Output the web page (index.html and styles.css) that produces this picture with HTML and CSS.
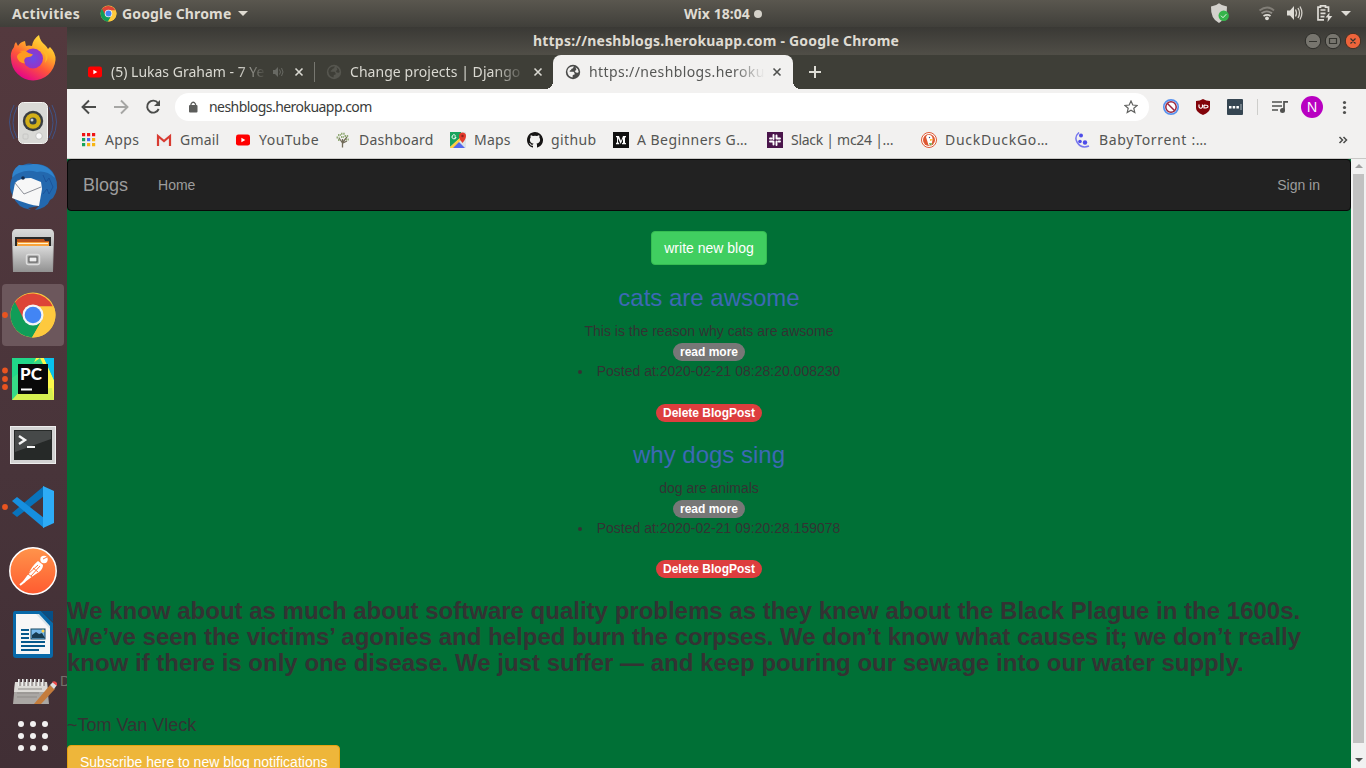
FILE: index.html
```html
<!DOCTYPE html>
<html lang="en">
<head>
<meta charset="utf-8">
<title>Blogs</title>
<link rel="stylesheet" href="styles.css">
</head>
<body>
<svg width="0" height="0" class="defs">
  <defs>
    <symbol id="chrome" viewBox="0 0 48 48">
      <circle cx="24" cy="24" r="22.5" fill="#fdc93e"/>
      <path d="M4.5 12.8A22.5 22.5 0 0 1 43.8 15.5H24L14 29z" fill="#dd4437"/>
      <path d="M5.8 10.800A22.500 22.500 0 0 0 23 46.500L33 29 15 29z" fill="#109d58"/>
      <path d="M33.500 28.500L23 46.500A22.500 22.500 0 0 0 44.800 15.500H24z" fill="#fdc93e"/>
      <circle cx="24" cy="24" r="10.500" fill="#f5f5f5"/><circle cx="24" cy="24" r="8.300" fill="#4285f4"/>
    </symbol>
    <symbol id="youtube" viewBox="0 0 16 16">
      <rect x="1" y="2.600" width="14" height="11" rx="2.400" fill="#f00"/><path d="M6.400 5.800v4.400L10.300 8z" fill="#fff"/>
    </symbol>
    <symbol id="globe" viewBox="0 0 16 16">
      <circle cx="8" cy="8" r="7.200" fill="currentColor"/>
      <path d="M2.300 7.600Q2.500 3.800 6 2.700L8.800 2.300 8 4.200 6.200 5v1.300H5L4.600 7.800h4l1 1.400v1.300l-1.800.6-.3 2.400Q3 13 2.300 7.600zM10.500 3.200q3 1.600 3.200 4.800l-.9.800-1.900-.2-1.200-1.700 1.700-1z" fill="var(--hole)"/>
    </symbol>
  </defs>
</svg>

<header class="topbar">
  <span class="activities">Activities</span>
  <svg class="app-icon" width="17" height="17"><use href="#chrome"/></svg>
  <span class="app-name">Google Chrome</span>
  <i class="caret"></i>
  <span class="clock">Wix 18:04</span><i class="clock-dot"></i>
  <svg class="tray" width="150" height="27" viewBox="1208 0 150 27">
    <path d="M1211 6.500q5-.5 8-3.200 3 2.700 8 3.200.5 12-8 16.500-8.500-4-8-16.500z" fill="#d3d1cc"/>
    <circle cx="1223.700" cy="15.700" r="5.200" fill="#35b44a"/><path d="M1221 15.700l2 2 3.300-3.500" fill="none" stroke="#e6f5e8"/>
    <g transform="translate(1 0)"><g fill="none" stroke-width="1.800"><path d="M1258.500 10.500q8-6 14.500 0" stroke="#817e77"/><path d="M1260.500 13.300q5.500-4 10.500 0" stroke="#918e88"/><path d="M1262.500 16q4-2.300 7 0" stroke="#dedcd6"/></g><circle cx="1266" cy="18.300" r="1.900" fill="#dedcd6"/></g>
    <g transform="translate(2 0)"><path d="M1285 10.500h3l4-4.500v14l-4-4.500h-3z" fill="#dedcd6"/>
    <path d="M1293.500 9.500q2 3.500 0 7M1296 8q3 5 0 10M1298 6.500q3.800 6.500 0 13" fill="none" stroke="#d5d2cb" stroke-width="1.300"/></g>
    <g transform="translate(3 0)"><path d="M1321 19.800h-6V7.200h2.500V5.800h5v1.400h3V12M1317.500 10h5M1317.500 13.300h5M1317.500 16.600h4" fill="none" stroke="#dedcd6" stroke-width="1.700"/>
    <path d="M1326.500 12.500l-4 5h2.500l-.5 4.500 4.800-6h-3z" fill="#dedcd6"/></g>
    <path d="M1341 11h10l-5 5z" fill="#dedcd6"/>
  </svg>
</header>

<div class="desktop">
<nav class="dock">
  <svg viewBox="0 0 67 64"><defs><linearGradient id="ff" x1=".9" y1="0" x2=".3" y2="1"><stop offset="0" stop-color="#fff04a"/><stop offset=".35" stop-color="#ffb128"/><stop offset=".62" stop-color="#ff5838"/><stop offset="1" stop-color="#e3008d"/></linearGradient><radialGradient id="fp"><stop offset="0" stop-color="#6a4be8"/><stop offset="1" stop-color="#9434c6"/></radialGradient></defs>
    <path d="M14 20q0-3 2-5l2 4q2-4 7-5l1 5q3-1 6 0 1-7 7-11 1 6 6 10 2 2 3 4l2-2q6 6 5.500 13A22.300 22.300 0 0 1 11 32q-1-7 3-12z" fill="url(#ff)"/>
    <circle cx="33" cy="31.500" r="10" fill="url(#fp)"/>
    <path d="M17 30q0-3 5-5l-3-1 6-.5q3 3 8 4l-2 2-5 1q-3 2-1 6-7-1-8-6.500z" fill="#ff9a20"/><path d="M38 23q10 2 7 13 5-6 1-13z" fill="#ffb529"/>
  </svg>
  <svg viewBox="0 0 67 64"><g fill="none" stroke="#3f5386" stroke-width="1"><path d="M14 14q-9 17 0 34M17 16q-8 16 0 31M52 14q9 17 0 34M49 16q8 16 0 31"/></g>
    <rect x="18.500" y="11.500" width="29" height="41" rx="5" fill="#d9d9d6" stroke="#f4f4f2"/><circle cx="33" cy="30" r="10.200" fill="#3a3e42"/><circle cx="33" cy="30" r="7.800" fill="#d3af18"/><circle cx="33" cy="30" r="3.600" fill="#34404b"/><circle cx="32" cy="29" r="1.500" fill="#ccd3d8"/><circle cx="39" cy="45" r="3.300" fill="#f9f9f9" stroke="#c4c4c2"/><rect x="23" y="43" width="5" height="5" rx="1" fill="none" stroke="#c6c6c4"/>
  </svg>
  <svg viewBox="0 0 67 64"><path d="M19 12q8-5 14-3 16-1 22 12 5 12-2 22l-3 2q-3 8-15 10l4-4-11 2 3 2q-14-2-18-14l-2-4q-3-9 3-17z" fill="#2368ae"/><path d="M19 10q10 1 14-1 17 0 22 14-9-8-18-6-9-3-18 1-4 1-7 5 0-8 7-13z" fill="#2f83cc"/><path d="M12 43l3-15q4-5 16-5l10 4 1 7-3 17q-10-1-27-8z" fill="#f7f7f7"/><path d="M15 28l9 11 17-7" fill="none" stroke="#8d9098"/><circle cx="23" cy="23" r="1.800" fill="#122a4c"/><path d="M43 20l3 7 3-4 4 9M43 39l4-5 2 5 4-7" stroke="#1b549c" fill="none"/>
  </svg>
  <svg viewBox="0 0 67 64"><defs><linearGradient id="cab" x1="0" y1="0" x2="0" y2="1"><stop stop-color="#dadada"/><stop offset="1" stop-color="#919191"/></linearGradient></defs>
    <g transform="translate(0 5)"><path d="M12 9q1-4 4-4h34q3 0 4 4v6l-1 33H13l-1-33z" fill="url(#cab)"/><path d="M15 13h36v10H15z" fill="#292929"/><path d="M17 15h27l1 2h4v5H17z" fill="#bd541b"/><path d="M17 18h32v4H17z" fill="#f9a33c"/><path d="M18 19h30v1H18z" fill="#fff0d0"/><path d="M13 22h40l-1 26H14z" fill="url(#cab)"/><rect x="26.500" y="30.500" width="13" height="10" rx="2" fill="#aaa" stroke="#ddd" stroke-width="1.500"/><rect x="29" y="33" width="8" height="5" fill="#eee" stroke="#555"/></g>
  </svg>
  <svg viewBox="0 1 67 64"><rect x="2" y="2" width="62" height="62" rx="4" fill="#6c575c"/><circle cx="5" cy="33" r="2.900" fill="#e95420"/><svg x="9" y="9" width="48" height="48"><use href="#chrome"/></svg></svg>
  <svg viewBox="0 1 67 64"><g fill="#e95420"><circle cx="5" cy="24.500" r="2.900"/><circle cx="5" cy="33" r="2.900"/><circle cx="5" cy="41" r="2.900"/></g>
    <rect x="12" y="12" width="42" height="42" fill="#21d789"/><path d="M36 12h8l10 22v20H18z" fill="#fcf84a"/><path d="M44 12h10v22z" fill="#08c2ee"/><path d="M12 32l28-20 3 6-29 36h-2z" fill="#36da86"/><path d="M12 54l8-9 32-3 2 12z" fill="#d5ef50"/><rect x="18" y="18" width="30" height="30" fill="#080808"/><path d="M21 43.500h11" stroke="#fff" stroke-width="2"/><text x="20" y="34" class="pc">PC</text>
  </svg>
  <svg viewBox="0 1 67 64"><rect x="10.500" y="16.500" width="45" height="37" fill="#d2d2d2" stroke="#eee"/><rect x="14" y="20" width="38" height="30" fill="#262928"/><path d="M15 21h36v8L15 42z" fill="#464949"/><path d="M19 26l6 4-6 4" stroke="#f6f6f6" stroke-width="2.400" fill="none"/><path d="M27 37h8" stroke="#f6f6f6" stroke-width="2"/></svg>
  <svg viewBox="0 0 67 64"><circle cx="5" cy="32" r="2.900" fill="#e95420"/><path d="M12 38l5 4 27-21V11z" fill="#0873bb"/><path d="M12 26l5-4 27 21v10z" fill="#168fdf"/><path d="M43 11l11 5v32l-11 5z" fill="#2eacf7"/></svg>
  <svg viewBox="0 0 67 64"><defs><linearGradient id="pm" x1="0" y1="0" x2="0" y2="1"><stop stop-color="#ff944b"/><stop offset="1" stop-color="#ff5b30"/></linearGradient></defs><circle cx="33" cy="32" r="23.200" fill="url(#pm)" stroke="#fff" stroke-width="1.500"/><circle cx="44" cy="20.500" r="3.700" fill="#fff"/><path d="M38 22l4 3 1 1q0 4-4 7l-6 4-8 6-4 2 8-11q3-7 9-12z" fill="#fff"/><path d="M25 42l-5 4" stroke="#fff" stroke-width="2"/><path d="M27 36l11-10M31 37l9-10M28 35l4 3M33 29l5 4M43 20l4-2" stroke="#ff783d"/></svg>
  <svg viewBox="0 0 67 64"><path d="M15 8h26l12 12v32q0 3-3 3H16q-3 0-3-3V11q0-3 2-3z" fill="#0869a9"/><path d="M41 8h12v11z" fill="#064f86"/><path d="M16 11h22l12 13v27H16z" fill="#f7f7f7"/><path d="M36 11h3l11 12v3z" fill="#d8e3e9"/><path d="M21 27h8M21 31h8M21 35h8M21 39h24M21 43h24M21 47h18" stroke="#07598c" stroke-width="1.900"/><rect x="31" y="26" width="14" height="10" fill="#77b8e8" stroke="#164963"/><path d="M32 35v-3l4-3 3 2 3-1 3 5z" fill="#173c50"/><circle cx="43" cy="28" r="1.500" fill="#ffd34a"/></svg>
  <svg class="clipped" viewBox="0 0 67 37"><text class="under" x="60" y="19">D</text><path d="M15 16h32l2 21H13z" fill="#aaa7a4"/><path d="M15 15h32l1 10H14z" fill="#dcdad6"/><path d="M18 22h24M17 26h22M17 30h20" stroke="#8f8c89"/><path d="M19 12v7M23 12v7M27 12v7M31 12v7M35 12v7M39 12v7M43 12v7" stroke="#eee" stroke-width="2"/><path d="M20 12v7M24 12v7M28 12v7M32 12v7M36 12v7M40 12v7M44 12v7" stroke="#6c6562"/><path d="M34 37L50 18l5 4-14 15z" fill="#c47c3c"/><path d="M50 18l3-3 4 3-3 4z" fill="#dedede"/><path d="M52 15q3-2 5 1v3z" fill="#ef4a4a"/></svg>
  <svg viewBox="0 0 67 64"><g fill="#f2f0f0"><circle cx="21" cy="20" r="3"/><circle cx="33" cy="20" r="3"/><circle cx="45" cy="20" r="3"/><circle cx="21" cy="32" r="3"/><circle cx="33" cy="32" r="3"/><circle cx="45" cy="32" r="3"/><circle cx="21" cy="44" r="3"/><circle cx="33" cy="44" r="3"/><circle cx="45" cy="44" r="3"/></g></svg>
</nav>

<main class="window">
  <div class="titlebar"><span>https://neshblogs.herokuapp.com - Google Chrome</span>
    <svg width="60" height="28" viewBox="1301 27 60 28"><circle cx="1313" cy="41" r="7.700" fill="#77756e" stroke="#2d2d29"/><circle cx="1333" cy="41" r="7.700" fill="#77756e" stroke="#2d2d29"/><circle cx="1353" cy="41" r="7.700" fill="#ee643b" stroke="#3d3026"/><path d="M1309 41.500h8M1329.500 38.500h7v5h-7zM1350.500 38.500l5 5m0-5l-5 5" fill="none" stroke="#34342f" stroke-width="1.200"/></svg>
  </div>
  <div class="tabs">
    <div class="tab tab-one"><svg width="16" height="16"><use href="#youtube"/></svg><span>(5) Lukas Graham - 7 Ye</span><svg class="sound" width="12" height="12" viewBox="0 0 12 12"><path d="M1 4h2l3-3v10L3 8H1z" fill="#686963"/><path d="M7.500 3.500q2 2.500 0 5M9.500 2q3 4 0 8" fill="none" stroke="#686963"/></svg><svg class="x" width="10" height="10" viewBox="0 0 10 10"><path d="M1.500 1.500l7 7m0-7l-7 7"/></svg></div>
    <div class="tab tab-two"><svg class="dim" width="16" height="16"><use href="#globe"/></svg><span>Change projects | Django</span><svg class="x" width="10" height="10" viewBox="0 0 10 10"><path d="M1.500 1.500l7 7m0-7l-7 7"/></svg></div>
    <div class="tab tab-active"><svg class="dark" width="16" height="16"><use href="#globe"/></svg><span>https://neshblogs.heroku</span><svg class="x" width="10" height="10" viewBox="0 0 10 10"><path d="M1.500 1.500l7 7m0-7l-7 7"/></svg></div>
    <svg class="plus" width="14" height="14" viewBox="0 0 14 14"><path d="M7 1v12M1 7h12"/></svg>
  </div>
  <div class="toolbar">
    <svg width="108" height="36" viewBox="67 89 108 36" fill="none" stroke-width="1.900"><path d="M96 107H83.500M89 100.500l-6.500 6.500 6.500 6.500" stroke="#4b4c4a"/><path d="M114 107h12.500M121 100.500l6.500 6.500-6.500 6.500" stroke="#a6a6a4"/><path d="M158 103a6 6 0 1 0 .7 6" stroke="#4b4c4a"/><path d="M160 100v6h-6z" fill="#4b4c4a"/></svg>
    <div class="address"><svg width="10" height="12" viewBox="0 0 10 12"><rect x="1" y="4" width="8.500" height="7.500" rx="1" fill="#5c5d5b"/><path d="M3 5V3q2.200-3.500 4.500 0v2" fill="none" stroke="#5c5d5b" stroke-width="1.300"/></svg><span>neshblogs.herokuapp.com</span>
      <svg class="star" width="14" height="14" viewBox="0 0 14 14"><path d="M7 1l1.800 4 4.300.4-3.300 2.900 1 4.300L7 10.300l-3.800 2.300 1-4.300L.9 5.400l4.300-.4z" fill="none" stroke="#616260" stroke-width="1.200"/></svg></div>
    <svg width="217" height="36" viewBox="1149 89 217 36"><circle cx="1171" cy="107" r="7.200" fill="#fff" stroke="#5792ee" stroke-width="1.700"/><circle cx="1171" cy="107" r="5.200" fill="none" stroke="#9a253e" stroke-width="1.500"/><path d="M1167.500 103.500l7 7" stroke="#9a253e" stroke-width="1.500"/>
      <path d="M1196 101q4 0 7-2 3 2 7 2v7q0 4-7 7-7-3-7-7z" fill="#820309"/><path d="M1199 104.500v2.500q1.800 2.500 3.500 0v-2.500m1.500.5v3q4 0 4-1.500t-4-1.500" stroke="#fff" fill="none" stroke-width="1.200"/>
      <rect x="1227" y="99" width="16" height="16" rx="1" fill="#364652"/><path d="M1229 106h2.500v2.500h-2.500zm3.700 0h2.500v2.500h-2.500zm3.700 0h2.500v2.500h-2.500z" fill="#fff"/><path d="M1241 104v6" stroke="#aab4ba"/><path d="M1257.500 99v16" stroke="#cececb"/>
      <path d="M1272 102h10M1272 106h10M1272 110h6M1284 110.500v-8.700h4" fill="none" stroke="#50514f" stroke-width="1.700"/><circle cx="1282.500" cy="110.500" r="2.500" fill="#50514f"/><circle cx="1312" cy="107" r="11" fill="#b800c1"/><text class="avatar" x="1312" y="112" text-anchor="middle">N</text><g fill="#50514f"><circle cx="1344.500" cy="102.500" r="1.600"/><circle cx="1344.500" cy="107.500" r="1.600"/><circle cx="1344.500" cy="112.500" r="1.600"/></g></svg>
  </div>
  <div class="bookmarks">
    <div class="mark m-apps"><svg viewBox="0 0 16 16"><path d="M1 1h3.200v3.200H1zm5 0h3.200v3.200H6zm5 0h3.200v3.200H11z" fill="#ef1515"/><path d="M1 6h3.200v3.200H1zm0 5h3.200v3.200H1z" fill="#16a35c"/><path d="M6 6h3.200v3.200H6z" fill="#4d67ef"/><path d="M11 6h3.200v3.200H11zm-5 5h3.200v3.200H6zm5 0h3.200v3.200H11z" fill="#f7b514"/></svg><span>Apps</span></div>
    <div class="mark m-gmail"><svg viewBox="0 0 16 16"><path d="M1 3h14v11H1z" fill="#eee"/><path d="M2 14V4l6 5 6-5v10" fill="none" stroke="#d83b31" stroke-width="2.200"/></svg><span>Gmail</span></div>
    <div class="mark m-youtube"><svg><use href="#youtube"/></svg><span>YouTube</span></div>
    <div class="mark m-dashboard"><svg viewBox="0 0 16 16"><path d="M7.500 15.500V7m0 4L4 6m4 4l4-5m-4 6l4-2" stroke="#716b59" stroke-width="1.300" fill="none"/><path d="M3 3h3M6 1.800h4M1.500 5.500h3M9.500 4h4M3 8h2M11 7.500h3M6 5h3" stroke="#92aa76" stroke-width="2" stroke-dasharray="1.500 .7"/></svg><span>Dashboard</span></div>
    <div class="mark m-maps"><svg viewBox="0 0 16 16"><path d="M0 0h16v16H0z" fill="#dce4e7"/><path d="M0 0h11v5L0 15z" fill="#18a45c"/><path d="M1 16l7-7 7 7z" fill="#5468ed"/><path d="M0 15L12 4v3L3 16H0z" fill="#ffcf40"/><path d="M9 4a3.500 3.500 0 0 1 7 0q0 3-3.500 7Q9 7 9 4z" fill="#e33b2d"/><circle cx="12.500" cy="4" r="1.200" fill="#8c251e"/><path d="M5.500 3.500a2 2 0 1 0 .5 1.500H4.500" fill="none" stroke="#fff"/></svg><span>Maps</span></div>
    <div class="mark m-github"><svg viewBox="0 0 16 16"><path fill="#171515" d="M8 0C3.600 0 0 3.600 0 8c0 3.500 2.300 6.500 5.500 7.600.4.100.5-.2.500-.4v-1.500c-2.200.5-2.700-.9-2.700-.9-.4-.9-.9-1.200-.9-1.200-.7-.5.100-.5.100-.5.800.100 1.200.8 1.200.8.7 1.200 1.900.9 2.300.7.100-.5.300-.9.500-1.100-1.800-.2-3.600-.9-3.600-4 0-.9.300-1.600.8-2.100-.1-.2-.4-1 .1-2.100 0 0 .7-.2 2.200.8a7.500 7.500 0 0 1 4 0c1.500-1 2.200-.8 2.200-.8.4 1.100.2 1.900.1 2.100.5.600.8 1.300.8 2.100 0 3.100-1.900 3.800-3.700 4 .3.300.6.800.6 1.500v2.200c0 .2.100.5.500.4A8 8 0 0 0 8 0z"/></svg><span>github</span></div>
    <div class="mark m-medium"><svg viewBox="0 0 16 16"><path d="M0 0h16v16H0z" fill="#111"/><path d="M3 4h3l2 5 2-5h3v1l-1 .7v5l1 .6v1H9v-1l1-.6V6.500L7.700 12 5 6.300v4l1.200 1v1H3v-1l1-1V5.500L3 5z" fill="#fff"/></svg><span>A Beginners G…</span></div>
    <div class="mark m-slack"><svg viewBox="0 0 16 16"><path d="M0 0h16v16H0z" fill="#4a154b"/><g fill="none" stroke="#fff" stroke-width="1.900" stroke-linecap="round"><path d="M6.500 3v4M3 6.500h1.500M9.500 3.500V6.500M9.500 6.500h3.500M3 9.500h3.500M6.500 9.500v3M9.500 9.500V13M11.500 9.500H13"/></g></svg><span>Slack | mc24 |…</span></div>
    <div class="mark m-duck"><svg viewBox="0 0 16 16"><circle cx="8" cy="8" r="7.500" fill="#fff" stroke="#de5833"/><circle cx="8" cy="8" r="6" fill="#de5833"/><path d="M5 5q1-3 4-2 3 1 2.500 5l-1 5q-2 1-3 0z" fill="#fff"/><path d="M9 7l4 .5L9 9z" fill="#fdb62b"/><circle cx="8.500" cy="5.500" r=".7" fill="#334f85"/><path d="M8 11l4 .5-3 2z" fill="#65a846"/></svg><span>DuckDuckGo…</span></div>
    <div class="mark m-baby"><svg viewBox="0 0 16 16"><path d="M4 .5Q-1 5 2 10q4 7 12 4" fill="none" stroke="#7777ef" stroke-width="1.500"/><g fill="#4d4ce8"><circle cx="6" cy="3.500" r="2"/><circle cx="5" cy="9.500" r="1.800"/><circle cx="10" cy="10.500" r="2.200"/></g></svg><span>BabyTorrent :…</span></div>
    <svg class="more" width="10" height="10" viewBox="0 0 10 10"><path d="M1.500 2l3 3-3 3M5.500 2l3 3-3 3" fill="none" stroke="#4b4c4a" stroke-width="1.500"/></svg>
  </div>
  <div class="viewport">
    <div class="page">
      <nav class="navbar"><span class="brand">Blogs</span><span>Home</span><span class="signin">Sign in</span></nav>
      <div class="center"><span class="btn success">write new blog</span></div>
      <article class="post"><h3>cats are awsome</h3><p>This is the reason why cats are awsome</p><div class="line more-line"><span class="badge">read more</span></div><ul><li>Posted at:2020-02-21 08:28:20.008230</li></ul><div class="line delete"><span class="badge danger">Delete BlogPost</span></div></article>
      <article class="post"><h3>why dogs sing</h3><p>dog are animals</p><div class="line more-line"><span class="badge">read more</span></div><ul><li>Posted at:2020-02-21 09:20:28.159078</li></ul><div class="line delete"><span class="badge danger">Delete BlogPost</span></div></article>
      <blockquote>We know about as much about software quality problems as they knew about the Black Plague in the 1600s.<br>We’ve seen the victims’ agonies and helped burn the corpses. We don’t know what causes it; we don’t really<br>know if there is only one disease. We just suffer — and keep pouring our sewage into our water supply.</blockquote>
      <div class="author">~Tom Van Vleck</div>
      <span class="btn warning">Subscribe here to new blog notifications</span>
    </div>
    <div class="scrollbar"><i class="up"></i><i class="thumb"></i><i class="down"></i></div>
  </div>
</main>
</div>
</body>
</html>
```
FILE: styles.css
```css
* { box-sizing: border-box; }
body { margin: 0; width: 1366px; height: 768px; overflow: hidden; font-family: "Noto Sans", sans-serif; background: #48343a; }
svg { flex: none; display: block; }
.defs { position: absolute; }

.topbar { height: 27px; display: flex; align-items: center; background: linear-gradient(#5a574f, #403f3a); color: #dfdbd2; font-size: 14px; font-weight: 700; line-height: 27px; padding-left: 12px; white-space: nowrap; }
.activities { width: 88px; letter-spacing: .3px; }
.app-icon { margin-right: 5px; }
.app-name { width: 116px; letter-spacing: .15px; }
.caret { border: 5px solid transparent; border-top-color: #dfdbd2; border-bottom: 0; }
.clock { margin-left: 436px; width: 70px; letter-spacing: .05px; padding-bottom: 1px; }
.clock-dot { width: 8px; height: 8px; border-radius: 50%; background: #d5d2ca; }
.tray { margin-left: auto; margin-right: 8px; }

.desktop { display: flex; height: 741px; }
.dock { width: 67px; flex: none; overflow: hidden; background: linear-gradient(#54393e, #48343a 60%, #412f35); }
.dock > svg { width: 67px; height: 64px; }
.dock > .clipped { height: 37px; }
.pc { font: 900 17px Lato, sans-serif; fill: #fff; }
.under { font: 14px "Liberation Sans", sans-serif; fill: #74706b; }

.window { width: 1299px; display: flex; flex-direction: column; }
.titlebar { height: 28px; display: flex; align-items: center; background: linear-gradient(#3a3935, #504e47); color: #dfdbd2; font-size: 14px; font-weight: 700; padding-left: 466px; justify-content: space-between; padding-right: 5px; white-space: nowrap; letter-spacing: .2px; }
.titlebar span { padding-bottom: 2px; }
.tabs { height: 34px; display: flex; align-items: center; background: #3e3e37; padding-left: 8px; }
.tab { height: 34px; display: flex; align-items: center; color: #dad9d2; font-size: 14px; white-space: nowrap; }
.tab span { padding-bottom: 2px; -webkit-mask-image: linear-gradient(90deg, #000 82%, transparent); mask-image: linear-gradient(90deg, #000 82%, transparent); }
.tab-one { width: 240px; padding-left: 12px; }
.tab-one span { width: 155px; margin-left: 8px; }
.sound { margin-left: 6px; }
.x { fill: none; stroke: #dad9d2; stroke-width: 1.6; }
.tab-one .x { margin-left: 10px; }
.tab-one::after { content: ""; width: 1px; height: 20px; background: #777770; margin-left: 10px; }
.tab-two { width: 238px; padding-left: 11px; }
.tab-two span { width: 176px; margin-left: 8px; letter-spacing: .05px; }
.tab-two .x { margin-left: 7px; }
.dim { color: #56564f; --hole: #3e3e37; }
.dark { color: #4a4b4a; --hole: #f2f1f0; }
.tab-active { position: relative; width: 240px; padding-left: 12px; color: #565755; background: #f2f1f0; border-radius: 8px 8px 0 0; }
.tab-active::before, .tab-active::after { content: ""; position: absolute; bottom: 0; width: 8px; height: 8px; }
.tab-active::before { left: -8px; background: radial-gradient(circle at 0 0, transparent 8px, #f2f1f0 8px); }
.tab-active::after { right: -8px; background: radial-gradient(circle at 100% 0, transparent 8px, #f2f1f0 8px); }
.tab-active span { width: 176px; margin-left: 8px; letter-spacing: .38px; }
.tab-active .x { margin-left: 7px; stroke: #50514f; }
.plus { margin-left: 15px; stroke: #deddd6; stroke-width: 2; }

.toolbar { height: 36px; display: flex; align-items: center; background: #f2f1f0; }
.address { width: 974px; height: 28px; border-radius: 14px; background: #fff; display: flex; align-items: center; padding: 0 11px 0 13px; font-size: 14px; color: #3a3b3a; letter-spacing: -.55px; }
.address span { margin-left: 11px; padding-bottom: 2px; }
.star { margin-left: auto; }
.avatar { font: 14px "Noto Sans", sans-serif; fill: #fff; }
.bookmarks { height: 34px; display: flex; align-items: center; background: #f2f1f0; border-bottom: 1px solid #c9c8c6; padding: 0 18px 4px 14px; color: #545553; font-size: 14px; white-space: nowrap; }
.mark { display: flex; align-items: center; gap: 8px; }
.mark svg { width: 16px; height: 16px; }
.m-apps { width: 75px; letter-spacing: .4px; }
.m-gmail { width: 79px; letter-spacing: .2px; }
.m-youtube { width: 100px; letter-spacing: .5px; }
.m-dashboard { width: 115px; letter-spacing: .25px; }
.m-maps { width: 77px; letter-spacing: .2px; }
.m-github { width: 86px; letter-spacing: .4px; }
.m-medium { width: 154px; letter-spacing: .45px; }
.m-slack { width: 154px; letter-spacing: -.28px; }
.m-duck { width: 154px; letter-spacing: .72px; }
.m-baby { letter-spacing: .68px; }
.more { margin-left: auto; }

.viewport { height: 609px; display: flex; }
.page { width: 1284px; overflow: hidden; background: #007036; color: #333; font: 14px/20px "Liberation Sans", Arial, sans-serif; white-space: nowrap; }
.navbar { height: 52px; background: #222; border: 1px solid #080808; border-radius: 4px; margin-bottom: 20px; display: flex; align-items: center; color: #9d9d9d; padding: 0 30px 0 15px; }
.brand { font-size: 18px; margin-right: 30px; }
.signin { margin-left: auto; }
.center { display: flex; justify-content: center; }
.btn { display: inline-block; height: 34px; padding: 6px 12px; border: 1px solid; border-radius: 4px; color: #fff; }
.success { background: #40ce60; border-color: #35bc51; }
.warning { background: #eeb63a; border-color: #e6a211; }
.post { text-align: center; height: 156.4px; overflow: hidden; }
.center + .post { margin-top: 20px; }
.post h3 { margin: 0 0 10px; font-size: 24px; line-height: 26.4px; font-weight: 500; color: #3d69b4; }
.post + .post h3 { line-height: 27.2px; margin-bottom: 9.2px; }
.post p, .post ul { margin: 0; padding: 0; list-style-position: inside; }
.line { height: 20px; display: flex; justify-content: center; align-items: center; }
.more-line { padding-top: 2px; }
.delete { margin-top: 21.6px; }
.badge { height: 18px; padding: 3px 7px; font-size: 12px; line-height: 12px; font-weight: 700; color: #fff; background: #777; border-radius: 10px; }
.danger { background: #dd3e3e; }
blockquote { margin: 0; font-size: 24px; line-height: 26px; font-weight: 700; }
.author { font-size: 18px; margin-top: 39px; margin-bottom: 10px; }
.scrollbar { width: 15px; background: #f1f1f1; display: flex; flex-direction: column; align-items: center; }
.up, .down { border: 4px solid transparent; }
.up { border-bottom-color: #a0a0a0; border-top: 0; margin: 5px 0 6px; }
.thumb { width: 11px; height: 569px; background: #c1c1c1; }
.down { border-top-color: #505050; border-bottom: 0; margin-top: 15px; }
```
